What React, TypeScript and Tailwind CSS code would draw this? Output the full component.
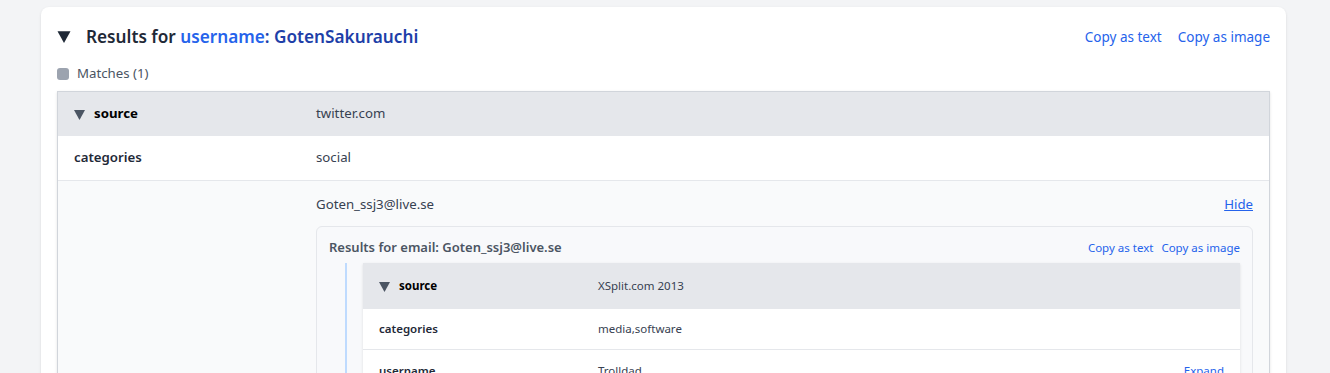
import React from "react";

const font = { fontFamily: '"Noto Sans", "Open Sans", sans-serif' };

const Caret = ({ className }: { className: string }) => (
  <svg viewBox="0 0 10 10" className={className} fill="currentColor">
    <path d="M0 1 L10 1 L5 10 Z" />
  </svg>
);

export default function App() {
  return (
    <div className="min-h-screen bg-[#f3f4f6] pl-[41px] pr-[44px] pt-[7px]" style={font}>
      <div className="rounded-lg bg-white px-4 pt-4 pb-6 shadow-sm">
        {/* header */}
        <div className="flex h-7 items-center justify-between">
          <div className="flex items-center">
            <Caret className="w-[14px] h-[13px] text-[#1f2937]" />
            <h2 className="ml-[15px] text-[17.2px] font-semibold text-[#1f2937]">
              Results for <span className="text-[#2563eb]">username</span>
              <span className="text-[#1e3fa8]">: GotenSakurauchi</span>
            </h2>
          </div>
          <div className="flex gap-4 text-[13.5px] text-[#2563eb]">
            <button>Copy as text</button>
            <button>Copy as image</button>
          </div>
        </div>

        <div className="mt-[13px] flex h-[20px] items-center">
          <span className="h-[12px] w-[12px] rounded-[3px] bg-[#9ca3af]" />
          <span className="ml-[8px] text-[13.25px] text-[#4b5563]">Matches (1)</span>
        </div>

        {/* outer table */}
        <div className="mt-[7px] border border-[#d1d5db] text-[13.25px] shadow-sm">
          <div className="flex h-[44px] items-center bg-[#e5e7eb]">
            <div className="flex w-[258px] items-center pl-4">
              <Caret className="w-[11px] h-[11px] text-[#4b5563]" />
              <span className="ml-[9px] font-bold text-black">source</span>
            </div>
            <span className="text-[#374151]">twitter.com</span>
          </div>
          <div className="flex h-[45px] items-center border-b border-[#e5e7eb] bg-white">
            <div className="w-[258px] pl-4 font-semibold text-[#1f2937]">categories</div>
            <span className="text-[#374151]">social</span>
          </div>
          <div className="flex bg-[#f9fafb]">
            <div className="w-[258px] shrink-0" />
            <div className="flex-1 pr-4 pt-[14px] pb-6">
              <div className="flex h-[20px] items-center justify-between">
                <span className="text-[#374151]">Goten_ssj3@live.se</span>
                <button className="text-[#2563eb] underline">Hide</button>
              </div>
              {/* nested result */}
              <div className="mt-[11px] rounded-md border border-[#e5e7eb] bg-[#f8f9fb] px-3 pt-[12px] pb-4">
                <div className="flex h-[18px] items-center justify-between">
                  <span className="text-[13px] font-semibold text-[#4b5563]">Results for email: Goten_ssj3@live.se</span>
                  <div className="flex gap-2 text-[11.5px] text-[#2563eb]">
                    <button>Copy as text</button>
                    <button>Copy as image</button>
                  </div>
                </div>
                <div className="mt-[6px] ml-4 flex">
                  <div className="w-[2px] bg-[#bfdbfe]" />
                  <div className="ml-4 flex-1 text-[11.5px] shadow-sm">
                    <div className="flex h-[46px] items-center bg-[#e5e7eb]">
                      <div className="flex w-[235px] items-center pl-4">
                        <Caret className="w-[11px] h-[11px] text-[#4b5563]" />
                        <span className="ml-[9px] font-bold text-black">source</span>
                      </div>
                      <span className="text-[#374151]">XSplit.com 2013</span>
                    </div>
                    <div className="flex h-[41px] items-center border-b border-[#e5e7eb] bg-white">
                      <div className="w-[235px] pl-4 font-semibold text-[#1f2937]">categories</div>
                      <span className="text-[#374151]">media,software</span>
                    </div>
                    <div className="flex h-[41px] items-center bg-white pr-4">
                      <div className="w-[235px] pl-4 font-semibold text-[#1f2937]">username</div>
                      <span className="flex-1 text-[#374151]">Trolldad</span>
                      <button className="text-[#2563eb]">Expand</button>
                    </div>
                  </div>
                </div>
              </div>
            </div>
          </div>
        </div>
      </div>
    </div>
  );
}
